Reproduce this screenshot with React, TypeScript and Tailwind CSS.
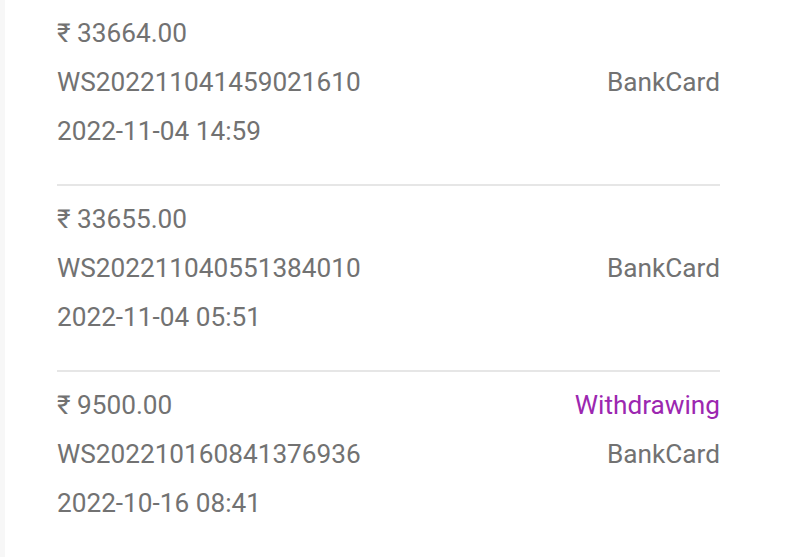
const records = [
  { amount: "₹ 33664.00", id: "WS202211041459021610", time: "2022-11-04 14:59", status: "", method: "BankCard" },
  { amount: "₹ 33655.00", id: "WS202211040551384010", time: "2022-11-04 05:51", status: "", method: "BankCard" },
  { amount: "₹ 9500.00", id: "WS202210160841376936", time: "2022-10-16 08:41", status: "Withdrawing", method: "BankCard" },
];

export default function App() {
  return (
    <div className="min-h-[557px] w-[807px] bg-white border-l-[5px] border-[#f7f7f7] text-[26.2px] leading-[49px] text-[#727272] font-['Roboto',sans-serif]">
      <div className="pl-[52px] w-[715px]">
        {records.map((r, i) => (
          <div
            key={r.id}
            className={i < records.length - 1 ? "pt-[9px] pb-[28px] border-b-2 border-[#e6e6e6]" : "pt-[9px] pb-[28px]"}
          >
            <div className="flex justify-between">
              <span>{r.amount}</span>
              <span className="text-[#9c27b0]">{r.status}</span>
            </div>
            <div className="flex justify-between">
              <span>{r.id}</span>
              <span>{r.method}</span>
            </div>
            <div>{r.time}</div>
          </div>
        ))}
      </div>
    </div>
  );
}
